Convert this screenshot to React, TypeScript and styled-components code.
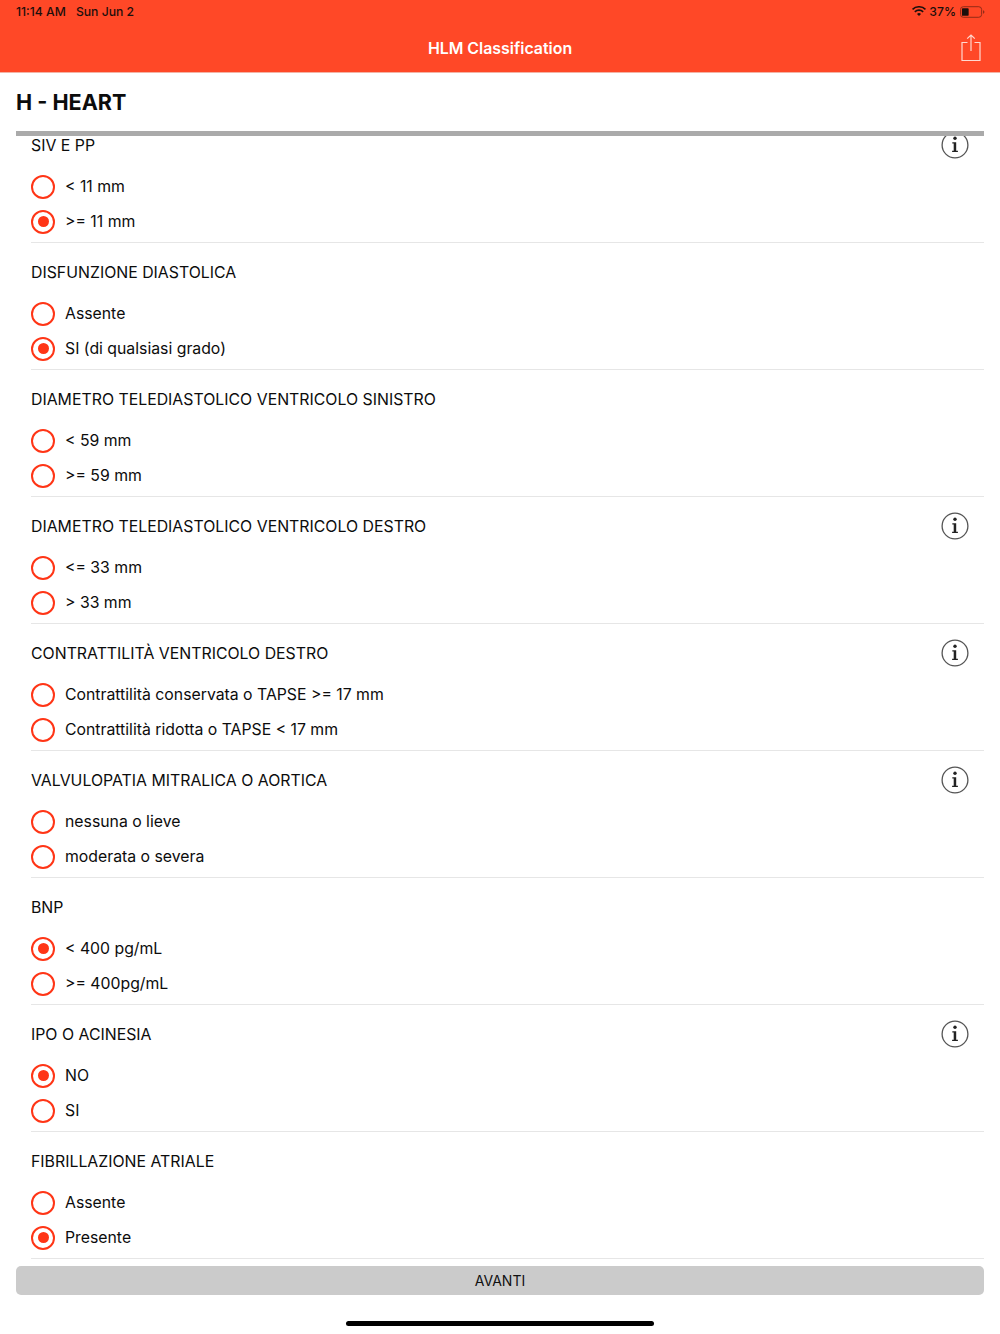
import React from "react";
import styled, { createGlobalStyle } from "styled-components";

const GlobalStyle = createGlobalStyle`
  html, body {
    margin: 0;
    padding: 0;
    background: #fff;
    font-family: Inter, "Liberation Sans", sans-serif;
    color: #111;
  }
`;

const sections = [
  { title: "SIV E PP", info: true, options: ["< 11 mm", ">= 11 mm"], selected: 1 },
  { title: "DISFUNZIONE DIASTOLICA", options: ["Assente", "SI (di qualsiasi grado)"], selected: 1 },
  { title: "DIAMETRO TELEDIASTOLICO VENTRICOLO SINISTRO", options: ["< 59 mm", ">= 59 mm"] },
  { title: "DIAMETRO TELEDIASTOLICO VENTRICOLO DESTRO", info: true, options: ["<= 33 mm", "> 33 mm"] },
  {
    title: "CONTRATTILITÀ VENTRICOLO DESTRO",
    info: true,
    options: ["Contrattilità conservata o TAPSE >= 17 mm", "Contrattilità ridotta o TAPSE < 17 mm"],
  },
  { title: "VALVULOPATIA MITRALICA O AORTICA", info: true, options: ["nessuna o lieve", "moderata o severa"] },
  { title: "BNP", options: ["< 400 pg/mL", ">= 400pg/mL"], selected: 0 },
  { title: "IPO O ACINESIA", info: true, options: ["NO", "SI"], selected: 0 },
  { title: "FIBRILLAZIONE ATRIALE", options: ["Assente", "Presente"], selected: 1 },
];

const Page = styled.div`
  width: 1000px;
  height: 1334px;
  display: flex;
  flex-direction: column;
  overflow: hidden;
`;

const Header = styled.header`
  height: 72px;
  flex: none;
  background: #ff4827;
  border-bottom: 1px solid #f3b3a5;
  display: flex;
  flex-direction: column;
`;

const StatusBar = styled.div`
  height: 23px;
  padding: 0 15px 0 16px;
  display: flex;
  align-items: center;
  justify-content: space-between;
  font-size: 12.2px;
  font-weight: 500;
  color: #1c0f0c;
`;

const StatusGroup = styled.div`
  display: flex;
  align-items: center;
  gap: 3px;
`;

const Percent = styled.span`
  margin-right: 1px;
`;

const DateText = styled.span`
  margin-left: 10px;
`;

const NavBar = styled.div`
  flex: 1;
  display: grid;
  grid-template-columns: 1fr auto 1fr;
  align-items: center;
  padding: 1px 19px 0 0;
`;

const NavTitle = styled.h1`
  margin: 0;
  grid-column: 2;
  font-size: 15.9px;
  font-weight: 600;
  color: #fff;
  padding-left: 19px;
`;

const ShareSlot = styled.div`
  grid-column: 3;
  display: flex;
  justify-content: flex-end;
`;

const PageTitle = styled.h2`
  margin: 0 16px;
  height: 58px;
  flex: none;
  display: flex;
  align-items: center;
  font-size: 21.6px;
  font-weight: 700;
  color: #0c0c0c;
`;

const Rule = styled.div`
  margin: 0 16px;
  height: 5px;
  flex: none;
  background: #aaa;
`;

const Scroller = styled.div`
  height: 1123px;
  flex: none;
  overflow: hidden;
  margin-left: 31px;
  margin-right: 16px;
`;

const List = styled.div`
  margin-top: -20px;
`;

const Section = styled.section`
  height: 127px;
  box-sizing: border-box;
  border-bottom: 1px solid #e6e6e6;
  display: flex;
  flex-direction: column;
`;

const SectionHead = styled.div`
  height: 48px;
  padding: 5px 15px 0 0;
  flex: none;
  display: flex;
  align-items: center;
  justify-content: space-between;
  font-size: 15.85px;
  color: #0c0c0c;
`;

const Option = styled.div`
  height: 35px;
  flex: none;
  display: flex;
  align-items: center;
  gap: 10px;
  font-size: 15.8px;
  color: #0c0c0c;
`;

const Radio = styled.span<{ $on?: boolean }>`
  width: 24px;
  height: 24px;
  box-sizing: border-box;
  border: 2px solid #ff3516;
  border-radius: 50%;
  display: flex;
  align-items: center;
  justify-content: center;
  &::after {
    content: "";
    width: 11px;
    height: 11px;
    border-radius: 50%;
    background: ${(p) => (p.$on ? "#ff3516" : "transparent")};
  }
`;

const Footer = styled.div`
  margin: 7px 16px 0;
  flex: none;
`;

const NextButton = styled.button`
  width: 100%;
  height: 29px;
  padding: 0;
  border: none;
  border-radius: 5px;
  background: #cbcbcb;
  font-family: inherit;
  font-size: 14px;
  color: #111;
`;

const HomeBar = styled.div`
  width: 308px;
  height: 5px;
  margin: 26px auto 0;
  flex: none;
  border-radius: 3px;
  background: #000;
`;

const WifiIcon = () => (
  <svg width="14" height="11" viewBox="0 0 16 12">
    <path d="M8 11.200 5.700 8.800a3.300 3.300 0 0 1 4.600 0Z" fill="#1c0f0c" />
    <path d="M3.900 7a5.900 5.900 0 0 1 8.200 0l1.300-1.400a7.800 7.800 0 0 0-10.800 0Z" fill="#1c0f0c" />
    <path d="M1.200 4.200a9.800 9.800 0 0 1 13.600 0L16 2.900a11.600 11.600 0 0 0-16 0Z" fill="#1c0f0c" />
  </svg>
);

const BatteryIcon = () => (
  <svg width="25" height="12" viewBox="0 0 26 12">
    <rect x="0.500" y="0.500" width="22" height="11" rx="3" fill="none" stroke="#8e2a16" />
    <rect x="2" y="2" width="7" height="8" rx="1" fill="#1c0f0c" />
    <path d="M24 4.200c.9.300 1.400 1 1.400 1.800S24.900 7.500 24 7.800Z" fill="#8e2a16" />
  </svg>
);

const ShareIcon = () => (
  <svg width="20" height="28" viewBox="0 0 20 28" fill="none" stroke="#ffd9d0" strokeWidth="1.2">
    <path d="M6.500 8.500H1v18h18v-18h-5.500" />
    <path d="M10 17V1M6.200 4.600 10 1l3.800 3.600" />
  </svg>
);

const InfoIcon = () => (
  <svg width="28" height="28" viewBox="0 0 28 28">
    <circle cx="14" cy="14" r="12.900" fill="none" stroke="#555" strokeWidth="1.300" />
    <circle cx="14" cy="7.300" r="1.700" fill="#222" />
    <path d="M11.300 11.200h3.900v8.500h1.700v1.300h-5.800v-1.300h1.600v-7.200h-1.400Z" fill="#222" />
  </svg>
);

export default function App() {
  return (
    <Page>
      <GlobalStyle />
      <Header>
        <StatusBar>
          <span>
            11:14 AM<DateText>Sun Jun 2</DateText>
          </span>
          <StatusGroup>
            <WifiIcon />
            <Percent>37%</Percent>
            <BatteryIcon />
          </StatusGroup>
        </StatusBar>
        <NavBar>
          <NavTitle>HLM Classification</NavTitle>
          <ShareSlot>
            <ShareIcon />
          </ShareSlot>
        </NavBar>
      </Header>
      <PageTitle>H - HEART</PageTitle>
      <Rule />
      <Scroller>
        <List>
          {sections.map((s) => (
            <Section key={s.title}>
              <SectionHead>
                <span>{s.title}</span>
                {s.info && <InfoIcon />}
              </SectionHead>
              {s.options.map((o, i) => (
                <Option key={o}>
                  <Radio $on={s.selected === i} />
                  <span>{o}</span>
                </Option>
              ))}
            </Section>
          ))}
        </List>
      </Scroller>
      <Footer>
        <NextButton>AVANTI</NextButton>
      </Footer>
      <HomeBar />
    </Page>
  );
}
